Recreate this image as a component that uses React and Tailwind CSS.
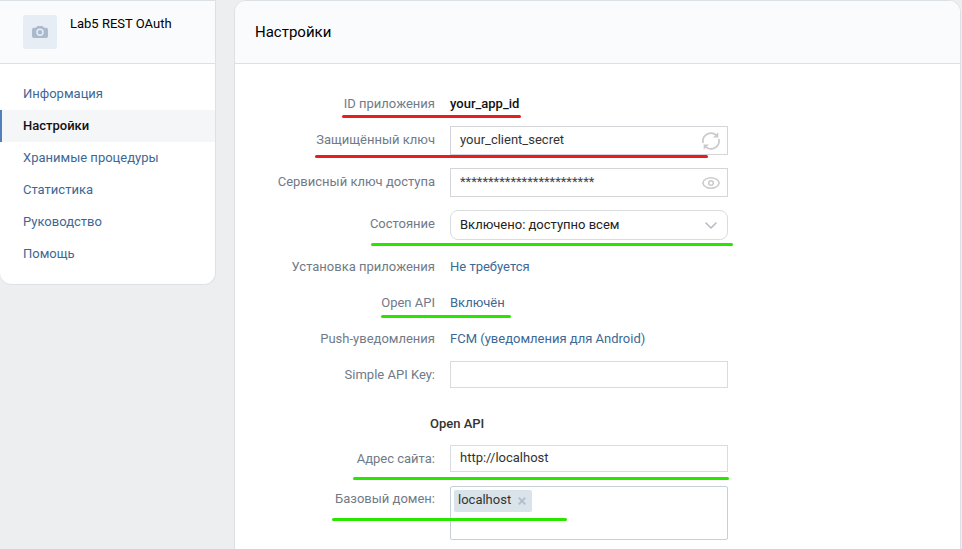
import React from 'react';

const menu = ['Информация', 'Настройки', 'Хранимые процедуры', 'Статистика', 'Руководство', 'Помощь'];

function Row({ label, height, mark, children }) {
  return (
    <div className={`relative flex items-start ${height}`}>
      <div className="w-[200px] shrink-0 pt-1.5 text-right leading-4 text-[#717a87]">{label}</div>
      <div className="ml-[15px] w-[278px] shrink-0">{children}</div>
      {mark && <span className={`absolute h-[3px] rounded-full ${mark}`} />}
    </div>
  );
}

function Value({ className, children }) {
  return <div className={`pt-1.5 leading-4 ${className}`}>{children}</div>;
}

function RefreshIcon() {
  return (
    <svg className="h-5 w-5" viewBox="0 0 20 20" fill="none" stroke="#cacaca" strokeWidth="1.7">
      <path d="M2.200 12A8 8 0 0 1 15.300 4.200" />
      <path d="M17.800 8A8 8 0 0 1 4.700 15.800" />
      <path d="M17.300 1.300v5.200h-5.200z" fill="#cacaca" stroke="none" />
      <path d="M2.700 18.700v-5.200h5.200z" fill="#cacaca" stroke="none" />
    </svg>
  );
}

function EyeIcon() {
  return (
    <svg className="h-3 w-[18px]" viewBox="0 0 18 12" fill="none" stroke="#cacaca" strokeWidth="1.500">
      <path d="M.8 6C1.600 2.800 5.200 .8 9 .8S16.400 2.800 17.200 6C16.400 9.200 12.800 11.200 9 11.200S1.600 9.200 .8 6z" />
      <circle cx="9" cy="6" r="2.300" />
    </svg>
  );
}

export default function App() {
  return (
    <div className="flex h-[549px] w-[962px] items-start overflow-hidden bg-[#edeef0] font-['Roboto',sans-serif] text-[13px] text-black">
      <aside className="h-[285px] w-[216px] shrink-0 overflow-hidden rounded-b-xl border-t border-r border-b border-[#dce1e6] bg-white">
        <div className="flex h-[63px] gap-[13px] border-b border-[#dce1e6] bg-[#fafbfc] pt-3.5 pl-[23px]">
          <div className="flex h-[34px] w-[34px] items-center justify-center rounded-[3px] bg-[#e6edf5]">
            <svg className="h-3 w-4" viewBox="0 0 16 12" fill="#aabacc">
              <path fillRule="evenodd" d="M2 1.800h2L5 .4Q5.300 0 5.800 0h4.400q.5 0 .8.400l1 1.400h2a2 2 0 0 1 2 2V10a2 2 0 0 1-2 2H2a2 2 0 0 1-2-2V3.800a2 2 0 0 1 2-2zM8 2.600a3.700 3.700 0 1 0 0 7.400A3.700 3.700 0 0 0 8 2.600zm0 1.500a2.200 2.200 0 1 1 0 4.400 2.200 2.200 0 0 1 0-4.400z" />
            </svg>
          </div>
          <div className="leading-[18px]">Lab5 REST OAuth</div>
        </div>
        <nav className="pt-3.5">
          {menu.map((item) => (
            <div
              key={item}
              className={
                item === 'Настройки'
                  ? 'h-8 border-l-2 border-[#5181b8] bg-[#f5f6f8] pl-[21px] leading-8 font-medium text-[#111]'
                  : 'h-8 pl-[23px] leading-8 text-[#3d6894]'
              }
            >
              {item}
            </div>
          ))}
        </nav>
      </aside>

      <main className="ml-[18px] h-[560px] w-[727px] shrink-0 overflow-hidden rounded-t-xl border border-[#dce1e6] bg-white">
        <header className="h-[63px] border-b border-[#dce1e6] bg-[#fafbfc] pl-5 text-[15px] leading-[63px]">Настройки</header>
        <section className="pt-[26px]">
          <Row label="ID приложения" height="h-9" mark="left-[107px] top-[25px] w-[179px] bg-[#e81e1e]">
            <Value className="font-medium text-[#111]">your_app_id</Value>
          </Row>
          <Row label="Защищённый ключ" height="h-[42px]" mark="left-[80px] top-[29px] w-[393px] bg-[#e81e1e]">
            <div className="flex h-[29px] items-center justify-between border border-[#d3d5d9] pr-1.5 pl-[9px]">
              <span className="pb-0.5 text-[#333]">your_client_secret</span>
              <RefreshIcon />
            </div>
          </Row>
          <Row label="Сервисный ключ доступа" height="h-[42px]">
            <div className="flex h-[29px] items-center justify-between border border-[#d3d5d9] pr-[7px] pl-[9px]">
              <span className="pb-px text-[#444]">************************</span>
              <EyeIcon />
            </div>
          </Row>
          <Row label="Состояние" height="h-[43px]" mark="left-[136px] top-[33px] w-[362px] bg-[#2ae500]">
            <div className="flex h-[30px] items-center justify-between rounded-lg border border-[#d9dcdf] pr-2.5 pl-[9px]">
              <span className="text-[#222]">Включено: доступно всем</span>
              <svg className="h-[7px] w-3" viewBox="0 0 12 7" fill="none" stroke="#b8bcc1" strokeWidth="1.600" strokeLinecap="round" strokeLinejoin="round">
                <path d="M1 1l5 5 5-5" />
              </svg>
            </div>
          </Row>
          <Row label="Установка приложения" height="h-9">
            <Value className="text-[#3d6894]">Не требуется</Value>
          </Row>
          <Row label="Open API" height="h-9" mark="left-[146px] top-[26px] w-[130px] bg-[#2ae500]">
            <Value className="text-[#3d6894]">Включён</Value>
          </Row>
          <Row label="Push-уведомления" height="h-9">
            <Value className="text-[#3d6894]">FCM (уведомления для Android)</Value>
          </Row>
          <Row label="Simple API Key:" height="h-12">
            <div className="h-[27px] border border-[#d9dbde]" />
          </Row>
          <h2 className="h-9 pt-[7px] pl-[195px] leading-4 font-medium text-[#333]">Open API</h2>
          <Row label="Адрес сайта:" height="h-10" mark="left-[118px] top-[32px] w-[376px] bg-[#2ae500]">
            <div className="h-[27px] border border-[#d9dbde] pl-[9px] leading-6 text-[#333]">http://localhost</div>
          </Row>
          <Row label="Базовый домен:" height="h-[60px]" mark="left-[97px] top-[33px] w-[235px] bg-[#2ae500]">
            <div className="mt-px h-[54px] rounded-[2px] border border-[#c5d0db] pt-[3px] pl-[3px]">
              <div className="flex h-[22px] w-[78px] items-center justify-between rounded-[2px] bg-[#dae2ea] pr-1.5 pl-1">
                <span className="pb-0.5 text-[#333]">localhost</span>
                <svg className="h-2 w-2" viewBox="0 0 8 8" stroke="#b0bfce" strokeWidth="1.900">
                  <path d="M.7.7l6.600 6.600M7.300.7L.7 7.300" />
                </svg>
              </div>
            </div>
          </Row>
        </section>
      </main>
    </div>
  );
}
